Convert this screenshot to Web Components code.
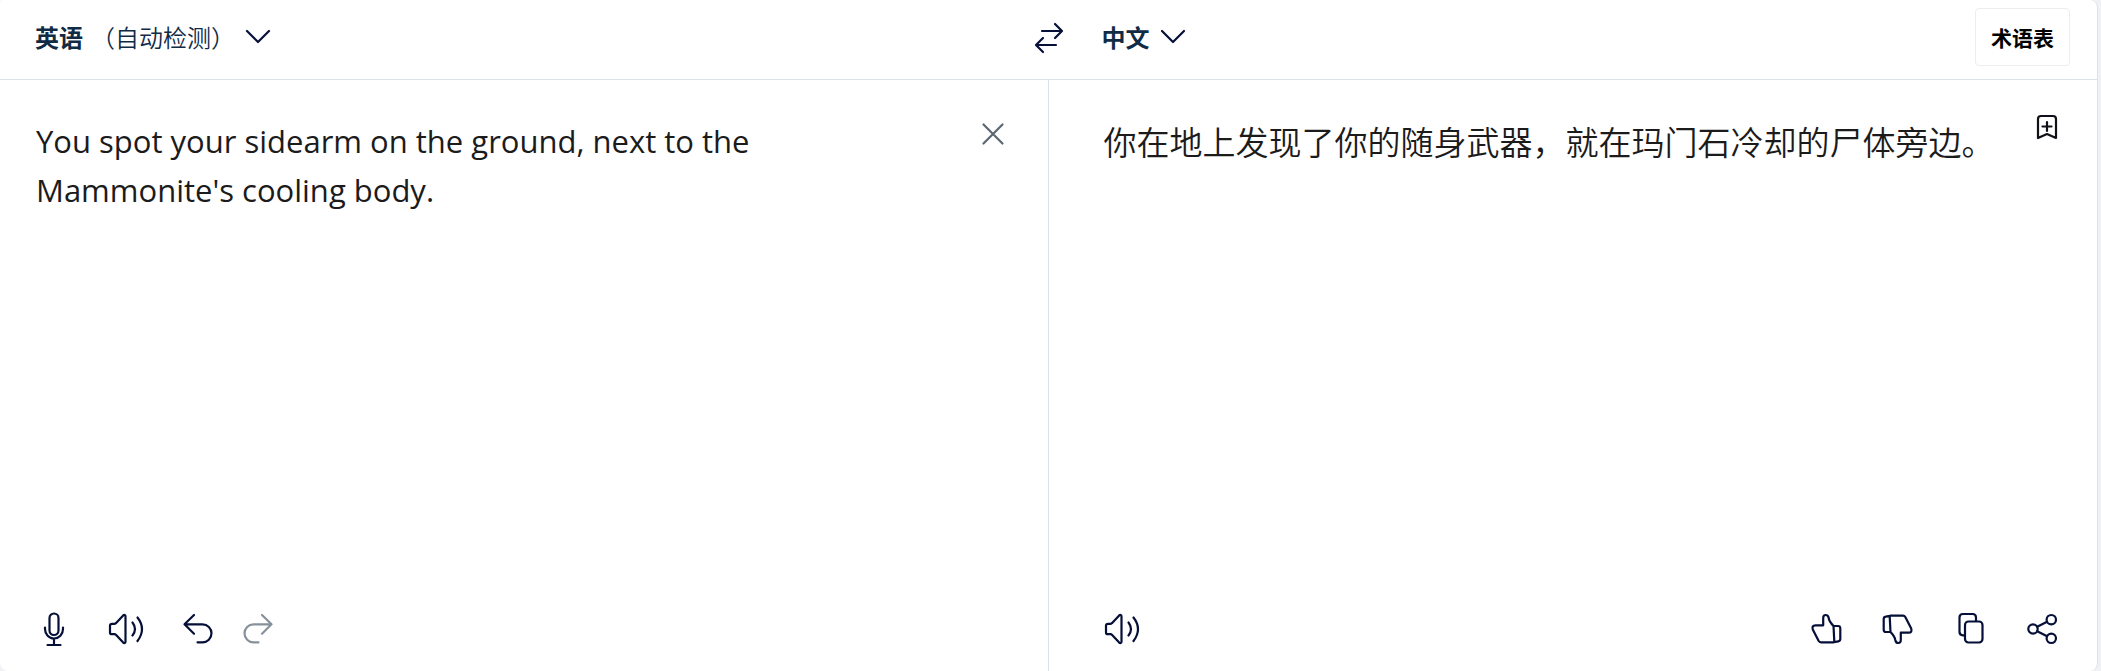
<!DOCTYPE html>
<html lang="zh-CN">
<head>
<meta charset="utf-8">
<title>翻译</title>
<style>
  html, body {
    height: 100%;
  }
  body {
    margin: 0;
    background: #eff1f4;
    color: #0f2b46;
    font-family: "Open Sans", "Noto Sans CJK SC", sans-serif;
  }
</style>
</head>
<body>
<translator-app></translator-app>

<script>
/*
icon-glyph: dibuja un icono de la lista
propiedades
  - name
*/
const icons = {
  chevron: '<path d="M7 12l11 11 11-11"/>',
  swap: '<path d="M11 12h19M24 5l7 7-7 7M25 26H6M12 19l-7 7 7 7"/>',
  close: '<path d="M8.500 8.500l19 19M27.500 8.500l-19 19"/>',
  bookmark: '<path d="M9 29V10q0-3 3-3h12q3 0 3 3v19l-9-4-9 4zM18 13v9M13.500 17.500h9"/>',
  mic: '<rect x="13.500" y="2.500" width="9" height="21.500" rx="4.500"/><path d="M9 16.500v1.500a9 9.500 0 0 0 18 0v-1.500M18 27.500V34M11.500 34h13"/>',
  speaker: '<path d="M4 12.800h2.400c.6 0 1-.2 1.500-.6L15.200 4.400c1-.9 2.300-.6 2.300.8v25.600c0 1.400-1.300 1.700-2.300.8L7.900 23.800c-.4-.4-.9-.6-1.500-.6H4q-2 0-2-1.800v-6.800q0-1.800 2-1.800zM24.500 11.500q5 6.500 0 13M29.500 6.500q9 11.500 0 23.500"/>',
  undo: '<path d="M14 4l-9.500 9.300L14 22.700M5 13.300h17.500a9 9 0 0 1 0 18h-5"/>',
  redo: '<path d="M22 4l9.500 9.300L22 22.700M31 13.300H13.500a9 9 0 0 0 0 18h5"/>',
  like: '<path d="M25.500 31.300H13q-1.500 0-2.300-1.300L4.900 18.800q-1.500-4.500 2.600-4.500h7.700V7q0-3 2.500-3t3 3q.5 3.500 4.800 8l.8 15.500q0 .8-.8.8zM25.800 15H30q2.300 0 2.300 2.300V28q0 2-2 2.300l-4.300.8"/>',
  dislike: '<g transform="rotate(180 18 18)"><path d="M25.500 31.300H13q-1.500 0-2.300-1.300L4.900 18.800q-1.500-4.500 2.600-4.500h7.700V7q0-3 2.500-3t3 3q.5 3.500 4.800 8l.8 15.500q0 .8-.8.8zM25.800 15H30q2.300 0 2.300 2.300V28q0 2-2 2.300l-4.300.8"/></g>',
  copy: '<rect x="13" y="10.500" width="17.500" height="21" rx="3.500"/><path d="M12.500 24.300H11q-3.500 0-3.500-3.500V6.500Q7.500 3 11 3h9.500Q24 3 24 6.500V10"/>',
  share: '<circle cx="9" cy="18" r="4.700"/><circle cx="27.300" cy="8.700" r="4.700"/><circle cx="27.300" cy="27.300" r="4.700"/><path d="M13.200 15.800l9.900-5M13.200 20.200l9.900 5"/>'
}

class IconGlyph extends HTMLElement {
  constructor() {
    super()

    this.attachShadow({ mode: "open" })
  }

  connectedCallback() {
    this.shadowRoot.innerHTML = `
      <style>
        :host {
          display: block;
          width: 36px;
          height: 36px;
        }
        svg {
          display: block;
          fill: none;
          stroke: currentColor;
          stroke-width: 2.2;
          stroke-linecap: round;
          stroke-linejoin: round;
        }
      </style>
      <svg width="36" height="36" viewBox="0 0 36 36" aria-hidden="true">${icons[this.getAttribute("name")] ?? ""}</svg>
    `
  }
}

/*
icon-button: botón con un solo icono
propiedades
  - icon
  - label
  - disabled
*/
class IconButton extends HTMLElement {
  constructor() {
    super()

    this.attachShadow({ mode: "open" })
  }

  connectedCallback() {
    this.shadowRoot.innerHTML = `
      <style>
        :host {
          display: block;
          flex: none;
          color: #050f38;
        }
        button {
          display: block;
          padding: 0;
          border: 0;
          background: none;
          color: inherit;
          cursor: pointer;
        }
        button:disabled {
          color: #87919c;
          cursor: default;
        }
      </style>
      <button type="button"><icon-glyph name="${this.getAttribute("icon")}"></icon-glyph></button>
    `

    const button = this.shadowRoot.querySelector("button")

    button.setAttribute("aria-label", this.getAttribute("label") ?? "")
    button.disabled = this.hasAttribute("disabled")
  }
}

/*
language-picker: idioma elegido, con una nota opcional
slots
  - (por defecto)
  - note
*/
class LanguagePicker extends HTMLElement {
  constructor() {
    super()

    this.attachShadow({ mode: "open" })
    this.shadowRoot.innerHTML = `
      <style>
        :host {
          display: block;
        }
        button {
          display: flex;
          align-items: center;
          padding: 0;
          border: 0;
          background: none;
          color: inherit;
          font: bold 24px/36px "Noto Sans CJK SC", sans-serif;
          cursor: pointer;
        }
        ::slotted([slot="note"]) {
          margin-left: 8px;
          font-weight: 350;
        }
        icon-glyph {
          margin-left: 5px;
          color: #050f38;
        }
      </style>
      <button type="button" aria-haspopup="listbox">
        <slot></slot>
        <slot name="note"></slot>
        <icon-glyph name="chevron"></icon-glyph>
      </button>
    `
  }
}

/*
language-bar: cabecera con los dos idiomas y el glosario
*/
class LanguageBar extends HTMLElement {
  constructor() {
    super()

    this.attachShadow({ mode: "open" })
    this.shadowRoot.innerHTML = `
      <style>
        :host {
          display: grid;
          grid-template-columns: 1fr auto 1fr;
          align-items: center;
          box-sizing: border-box;
          height: 80px;
          padding-bottom: 5px;
          border-bottom: 1px solid #dae1e8;
        }
        .side {
          display: flex;
          align-items: center;
          justify-content: space-between;
        }
        .source {
          padding-left: 35px;
        }
        .target {
          padding: 0 27px 0 35px;
        }
        .glossary {
          height: 58px;
          padding: 0 15px;
          border: 1px solid #ededf0;
          border-radius: 4px;
          background: #fff;
          color: #000;
          font: bold 21px/32px "Noto Sans CJK SC", sans-serif;
          cursor: pointer;
        }
      </style>
      <div class="side source">
        <language-picker>英语<span slot="note">（自动检测）</span></language-picker>
      </div>
      <icon-button icon="swap" label="交换语言"></icon-button>
      <div class="side target">
        <language-picker>中文</language-picker>
        <button class="glossary" type="button">术语表</button>
      </div>
    `
  }
}

/*
text-pane: texto arriba y herramientas abajo
slots
  - (por defecto): el texto
  - corner: acción de la esquina
  - tools, tools-end
*/
class TextPane extends HTMLElement {
  constructor() {
    super()

    this.attachShadow({ mode: "open" })
    this.shadowRoot.innerHTML = `
      <style>
        :host {
          display: flex;
          flex-direction: column;
          box-sizing: border-box;
          min-width: 0;
        }
        .content {
          flex: 1;
          display: flex;
          align-items: flex-start;
        }
        .text {
          flex: 1;
          min-width: 0;
          align-self: stretch;
          padding-top: 37px;
        }
        .tools {
          display: flex;
          justify-content: space-between;
          padding: 0 37px 24px 0;
        }
        .group {
          display: flex;
          gap: 36px;
        }
      </style>
      <div class="content">
        <div class="text"><slot></slot></div>
        <slot name="corner"></slot>
      </div>
      <div class="tools">
        <div class="group"><slot name="tools"></slot></div>
        <div class="group"><slot name="tools-end"></slot></div>
      </div>
    `
  }
}

class TranslatorApp extends HTMLElement {
  constructor() {
    super()

    this.attachShadow({ mode: "open" })
    this.shadowRoot.innerHTML = `
      <style>
        :host {
          display: flex;
          flex-direction: column;
          box-sizing: border-box;
          min-height: 100%;
          margin-right: 3px;
          border-right: 1px solid #dae1e8;
          border-radius: 2px 8px 8px 8px;
          background: #fff;
        }
        .panes {
          flex: 1;
          display: grid;
          grid-template-columns: 1fr 1fr;
        }
        .source {
          padding-left: 36px;
          border-right: 1px solid #dae1e8;
        }
        .target {
          padding-left: 55px;
        }
        textarea, output {
          display: block;
          box-sizing: border-box;
          width: 100%;
          height: 100%;
          margin: 0;
          padding: 0;
          border: 0;
          outline: 0;
          resize: none;
          background: none;
          color: #1b1b1b;
          font: 31px/49px "Open Sans", "Noto Sans CJK SC", sans-serif;
        }
        textarea {
          padding-right: 48px;
        }
        output {
          font-size: 33px;
          font-family: "Noto Sans CJK SC", sans-serif;
          font-weight: 350;
        }
        .clear {
          margin: 36px 37px 0 0;
          color: #5a6772;
        }
        .save {
          margin: 29px 32px 0 0;
          color: #101018;
        }
        .redo {
          margin-left: -12px;
        }
      </style>
      <language-bar></language-bar>
      <div class="panes">
        <text-pane class="source">
          <textarea aria-label="原文" spellcheck="false">You spot your sidearm on the ground, next to the Mammonite's cooling body.</textarea>
          <icon-button class="clear" slot="corner" icon="close" label="清除"></icon-button>
          <icon-button slot="tools" icon="mic" label="语音输入"></icon-button>
          <icon-button slot="tools" icon="speaker" label="朗读原文"></icon-button>
          <icon-button slot="tools" icon="undo" label="撤销"></icon-button>
          <icon-button class="redo" slot="tools" icon="redo" label="重做" disabled></icon-button>
        </text-pane>
        <text-pane class="target">
          <output aria-label="译文">你在地上发现了你的随身武器，就在玛门石冷却的尸体旁边。</output>
          <icon-button class="save" slot="corner" icon="bookmark" label="保存译文"></icon-button>
          <icon-button slot="tools" icon="speaker" label="朗读译文"></icon-button>
          <icon-button slot="tools-end" icon="like" label="赞"></icon-button>
          <icon-button slot="tools-end" icon="dislike" label="踩"></icon-button>
          <icon-button slot="tools-end" icon="copy" label="复制"></icon-button>
          <icon-button slot="tools-end" icon="share" label="分享"></icon-button>
        </text-pane>
      </div>
    `
  }
}

window.customElements.define("icon-glyph", IconGlyph)
window.customElements.define("icon-button", IconButton)
window.customElements.define("language-picker", LanguagePicker)
window.customElements.define("language-bar", LanguageBar)
window.customElements.define("text-pane", TextPane)
window.customElements.define("translator-app", TranslatorApp)
</script>
</body>
</html>
